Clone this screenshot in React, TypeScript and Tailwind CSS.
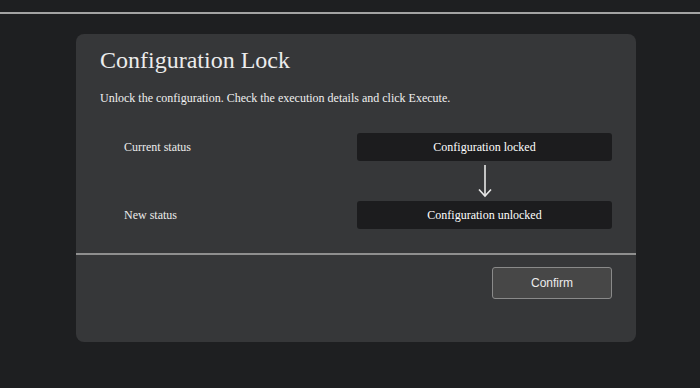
export default function App() {
  return (
    <div className="min-h-[388px] w-[700px] bg-[#1e1f21] font-['Liberation_Serif','Times_New_Roman',serif]">
      <div className="h-[12px]" />
      <div className="h-[2px] bg-[#a3a3a3]" />
      <div className="pt-[20px] pl-[76px]">
        <div className="w-[560px] h-[308px] rounded-[8px] bg-[#363739] flex flex-col">
          <div className="px-6 pt-[12px]">
            <h1 className="text-[24px] leading-[28px] text-[#ececec] font-normal font-['Liberation_Serif','Times_New_Roman',serif]">
              Configuration Lock
            </h1>
            <p className="mt-[17px] text-[12px] leading-[14px] text-[#f0f0f0]">
              Unlock the configuration. Check the execution details and click Execute.
            </p>
          </div>
          <div className="px-6 mt-[28px] grid grid-cols-[257px_255px]">
            <div className="pl-6 flex items-center h-[28px] text-[12px] text-[#ececec]">Current status</div>
            <div className="h-[28px] rounded-[3px] bg-[#1c1c1e] flex items-center justify-center text-[12px] text-white">
              Configuration locked
            </div>
            <div className="h-[40px]" />
            <div className="h-[40px] flex items-center justify-center">
              <svg width="14" height="34" viewBox="0 0 14 34" className="text-[#e8e8e8]">
                <line x1="7" y1="1" x2="7" y2="32" stroke="currentColor" strokeWidth="1.6" />
                <polyline points="1,25.5 7,32 13,25.5" fill="none" stroke="currentColor" strokeWidth="1.6" />
              </svg>
            </div>
            <div className="pl-6 flex items-center h-[28px] text-[12px] text-[#ececec]">New status</div>
            <div className="h-[28px] rounded-[3px] bg-[#1c1c1e] flex items-center justify-center text-[12px] text-white">
              Configuration unlocked
            </div>
          </div>
          <div className="mt-[24px] h-[2px] bg-[#8f8f8f]" />
          <div className="px-6 pt-[12px] flex justify-end">
            <button className="w-[120px] h-[32px] rounded-[3px] border border-[#8a8a8a] bg-[#474747] text-[12px] text-[#ececec] font-['Liberation_Sans',Arial,sans-serif]">
              Confirm
            </button>
          </div>
        </div>
      </div>
    </div>
  );
}
